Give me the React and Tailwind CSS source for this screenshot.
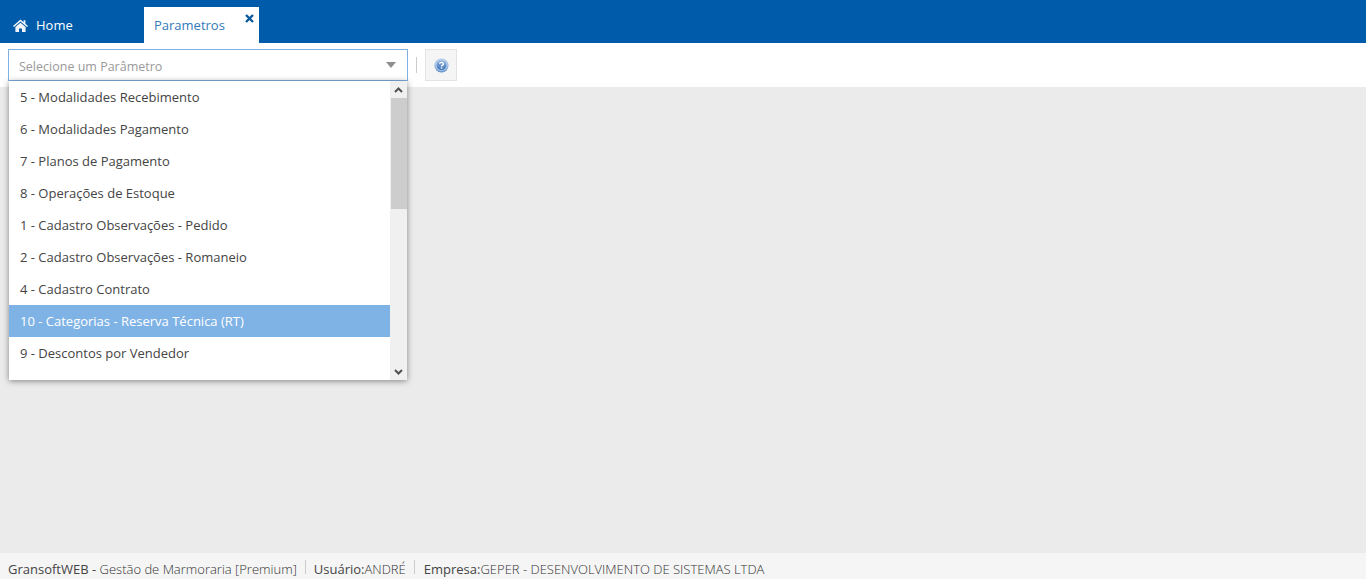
import React from "react";

const items = [
  "5 - Modalidades Recebimento",
  "6 - Modalidades Pagamento",
  "7 - Planos de Pagamento",
  "8 - Operações de Estoque",
  "1 - Cadastro Observações - Pedido",
  "2 - Cadastro Observações - Romaneio",
  "4 - Cadastro Contrato",
  "10 - Categorias - Reserva Técnica (RT)",
  "9 - Descontos por Vendedor",
];

export default function App() {
  return (
    <div className="h-[579px] w-[1366px] overflow-hidden flex flex-col bg-[#ebebeb] text-[13px] text-[#444] font-['Open_Sans',sans-serif]">
      <header className="h-[43px] shrink-0 bg-[#005baa] flex items-end">
        <div className="w-[144px] h-[36px] flex items-center pl-[13px] pt-[1px] text-white gap-[8px]">
          <svg width="15" height="13" viewBox="0 0 15 13" fill="#f2f6fa">
            <path d="M7.5 0.6 L0 7 L1 8.1 L7.5 2.6 L14 8.1 L15 7 L12.4 4.8 V1.2 H10.6 V3.2 Z" />
            <path d="M7.5 3.8 L2.4 8.1 V13 H6 V9.4 H9 V13 H12.6 V8.1 Z" />
          </svg>
          <span>Home</span>
        </div>
        <div className="relative w-[115px] h-[36px] bg-white flex items-center pl-[10px] pt-[1px] text-[#337ab7]">
          <span>Parametros</span>
          <svg className="absolute left-[101px] top-[7px]" width="9" height="9" viewBox="0 0 9 9" fill="none" stroke="#0b5a9e" strokeWidth="2.4">
            <path d="M1 1 L8 8 M8 1 L1 8" />
          </svg>
        </div>
      </header>

      <div className="relative h-[44px] shrink-0 bg-white flex items-start pt-[6px] pl-[8px]">
        <div className="w-[400px] h-[32px] border border-[#7fb2e0] bg-white flex items-center justify-between pl-[10px] pr-[11px] text-[#999]">
          <span className="text-[12.5px] pt-[4px]">Selecione um Parâmetro</span>
          <span className="w-0 h-0 border-l-[5.5px] border-r-[5.5px] border-t-[6px] border-l-transparent border-r-transparent border-t-[#8f8f8f]" />
        </div>
        <div className="ml-[8px] mt-[8px] h-[16px] w-px bg-[#cccccc]" />
        <button className="ml-[8px] w-[32px] h-[32px] bg-[#f5f5f5] border border-[#e3e3e3] flex items-center justify-center">
          <svg width="15" height="15" viewBox="0 0 15 15">
            <defs>
              <radialGradient id="help" cx="50%" cy="40%" r="60%">
                <stop offset="0%" stopColor="#dbe7f6" />
                <stop offset="75%" stopColor="#a7c3e6" />
                <stop offset="100%" stopColor="#4a7dbe" />
              </radialGradient>
              <linearGradient id="helpInner" x1="0" y1="0" x2="0" y2="1">
                <stop offset="0%" stopColor="#8fb1de" />
                <stop offset="100%" stopColor="#3f74b8" />
              </linearGradient>
            </defs>
            <circle cx="7.5" cy="7.5" r="7" fill="url(#help)" />
            <circle cx="7.5" cy="7.3" r="4.9" fill="url(#helpInner)" />
            <path d="M5.6 5.8 C5.8 3.9 9.4 3.9 9.4 5.9 C9.4 7.2 7.5 7.2 7.5 8.6" fill="none" stroke="#fff" strokeWidth="1.4" />
            <rect x="6.8" y="9.4" width="1.4" height="1.4" fill="#fff" />
          </svg>
        </button>

        <div className="absolute left-[9px] top-[38px] w-[398px] h-[299px] bg-white shadow-[0_1px_6px_rgba(0,0,0,0.45)] flex z-10">
          <ul className="w-[381px] h-full overflow-hidden text-[#444]">
            {items.map((t, i) => (
              <li
                key={t}
                className={
                  i === 7
                    ? "h-[32px] flex items-center pl-[11px] pt-[1px] bg-[#7fb3e6] text-white"
                    : "h-[32px] flex items-center pl-[11px] pt-[1px]"
                }
              >
                {t}
              </li>
            ))}
          </ul>
          <div className="w-[17px] h-full bg-[#f0f0f0] flex flex-col">
            <div className="h-[17px] flex items-center justify-center">
              <svg width="9" height="6" viewBox="0 0 9 6" fill="none" stroke="#505050" strokeWidth="2">
                <path d="M1 5 L4.5 1.5 L8 5" />
              </svg>
            </div>
            <div className="h-[111px] ml-px bg-[#cdcdcd]" />
            <div className="flex-1" />
            <div className="h-[17px] flex items-center justify-center">
              <svg width="9" height="6" viewBox="0 0 9 6" fill="none" stroke="#505050" strokeWidth="2">
                <path d="M1 1 L4.5 4.5 L8 1" />
              </svg>
            </div>
          </div>
        </div>
      </div>

      <main className="flex-1" />

      <footer className="h-[26px] shrink-0 bg-[#f5f5f5] flex items-start pl-[8px] pt-[7px] text-[#444] leading-[18px] whitespace-nowrap">
        <span>
          GransoftWEB - <span className="font-light text-[#333]">Gestão de Marmoraria [Premium]</span>
        </span>
        <span className="mx-[8px] h-[14px] w-px bg-[#cccccc]" />
        <span>
          Usuário:<span className="font-light text-[#333]">ANDRÉ</span>
        </span>
        <span className="ml-[8px] mr-[9px] h-[14px] w-px bg-[#cccccc]" />
        <span>
          Empresa:<span className="font-light text-[#333]">GEPER - DESENVOLVIMENTO DE SISTEMAS LTDA</span>
        </span>
      </footer>
    </div>
  );
}
